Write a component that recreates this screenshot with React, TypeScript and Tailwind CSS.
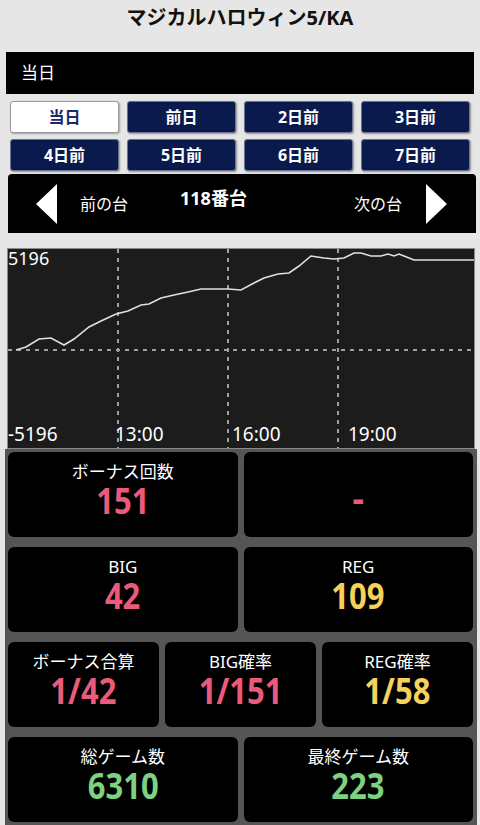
import React from "react";

const DAYS = ["当日", "前日", "2日前", "3日前", "4日前", "5日前", "6日前", "7日前"];

// slump graph points, px inside the chart box
const POINTS = [
  [8, 101], [18, 98], [31, 90], [43, 89], [56, 96], [66, 90], [81, 78], [93, 72],
  [108, 65], [120, 62], [133, 56], [141, 55], [153, 49], [166, 46], [180, 43],
  [193, 40], [206, 40], [220, 40], [233, 41], [246, 34], [256, 29], [270, 25],
  [281, 24], [291, 17], [303, 7], [316, 9], [326, 10], [336, 9], [346, 4], [353, 4],
  [363, 7], [373, 7], [380, 5], [386, 7], [391, 5], [406, 11], [466, 11],
];

type Stat = {
  label: string;
  value: string;
  color: string;
};

function StatCard({ label, value, color }: Stat) {
  return (
    <div className="h-[85px] rounded-[6px] bg-black flex flex-col items-center pt-[9px]">
      <div className="h-[22px] text-[17px] leading-[22px] text-white">{label}</div>
      <div className={`text-[36px] leading-[36px] font-bold scale-x-[0.86] ${color}`}>
        {value}
      </div>
    </div>
  );
}

const PINK = "text-[#ea5b7b]";
const YELLOW = "text-[#f6d25a]";
const GREEN = "text-[#7dd17f]";

export default function App() {
  return (
    <div className="w-[480px] h-[825px] overflow-hidden bg-[#e6e6e6] font-['Noto_Sans','Noto_Sans_CJK_JP',sans-serif] text-white">

      {/* TITLE */}
      <h1 className="h-[52px] pt-[3px] text-center text-[20px] leading-[30px] font-bold text-[#111]">
        マジカルハロウィン5/KA
      </h1>

      {/* HEADER */}
      <div className="mx-[6px] h-[42px] bg-black flex items-center px-[15px] text-[17px]">
        当日
      </div>

      {/* DAY BUTTONS */}
      <div className="mt-[7px] mx-[10px] grid grid-cols-4 gap-x-[8px] gap-y-[6px]">
        {DAYS.map((day, i) => (
          <button
            key={day}
            className={
              i === 0
                ? "h-[32px] rounded-[3px] bg-white border border-[#9a9a9a] text-[#1b2a6b] text-[16px] font-bold shadow-[1px_1px_2px_rgba(0,0,0,0.3)]"
                : "h-[32px] rounded-[3px] bg-[#0b1a4d] border border-[#6b7390] text-white text-[16px] font-bold shadow-[1px_1px_2px_rgba(0,0,0,0.35)]"
            }
          >
            {day}
          </button>
        ))}
      </div>

      {/* MACHINE NAV */}
      <div className="mt-[3px] ml-[8px] mr-[4px] h-[59px] rounded-t-[4px] bg-black flex items-center">
        <svg width="21" height="40" viewBox="0 0 21 40" className="ml-[28px]">
          <polygon points="21,0 0,20 21,40" fill="#fff" />
        </svg>
        <span className="ml-[23px] text-[16px]">前の台</span>
        <span className="ml-[52px] mb-[10px] text-[18px] font-bold">118番台</span>
        <div className="flex-1" />
        <span className="text-[16px]">次の台</span>
        <svg width="21" height="40" viewBox="0 0 21 40" className="ml-[24px] mr-[29px]">
          <polygon points="0,0 21,20 0,40" fill="#fff" />
        </svg>
      </div>

      {/* GRAPH */}
      <div className="relative mt-[15px] ml-[7px] w-[468px] h-[201px] bg-[#1c1c1c] border border-[#8a8a8a]">
        <svg width="466" height="199" className="absolute left-0 top-0">
          {[110, 220, 330].map((x) => (
            <line
              key={x}
              x1={x}
              y1={0}
              x2={x}
              y2={199}
              stroke="#a0a0a0"
              strokeWidth="2"
              strokeDasharray="4 5"
            />
          ))}
          <line x1={0} y1={101} x2={466} y2={101} stroke="#a0a0a0" strokeWidth="2" strokeDasharray="4 5" />
          <polyline
            points={POINTS.map((p) => p.join(",")).join(" ")}
            fill="none"
            stroke="#e0e0e0"
            strokeWidth="1.6"
          />
        </svg>
        <span className="absolute left-0 top-[0px] text-[18px] leading-[18px]">5196</span>
        <span className="absolute left-0 top-[176px] text-[19px] leading-[19px]">-5196</span>
        <span className="absolute left-[107px] top-[176px] text-[19px] leading-[19px]">13:00</span>
        <span className="absolute left-[224px] top-[176px] text-[19px] leading-[19px]">16:00</span>
        <span className="absolute left-[340px] top-[176px] text-[19px] leading-[19px]">19:00</span>
      </div>

      {/* STATS */}
      <div className="ml-[5px] w-[472px] h-[376px] bg-[#555] pt-[3px] pl-[3px] pr-[4px] flex flex-col gap-[10px]">
        <div className="grid grid-cols-2 gap-x-[6px]">
          <StatCard label="ボーナス回数" value="151" color={PINK} />
          <div className="h-[85px] rounded-[6px] bg-black flex items-center justify-center pt-[6px]">
            <span className={`text-[36px] font-bold ${PINK}`}>-</span>
          </div>
        </div>
        <div className="grid grid-cols-2 gap-x-[6px]">
          <StatCard label="BIG" value="42" color={PINK} />
          <StatCard label="REG" value="109" color={YELLOW} />
        </div>
        <div className="grid grid-cols-3 gap-x-[6px]">
          <StatCard label="ボーナス合算" value="1/42" color={PINK} />
          <StatCard label="BIG確率" value="1/151" color={PINK} />
          <StatCard label="REG確率" value="1/58" color={YELLOW} />
        </div>
        <div className="grid grid-cols-2 gap-x-[6px]">
          <StatCard label="総ゲーム数" value="6310" color={GREEN} />
          <StatCard label="最終ゲーム数" value="223" color={GREEN} />
        </div>
      </div>

    </div>
  );
}
